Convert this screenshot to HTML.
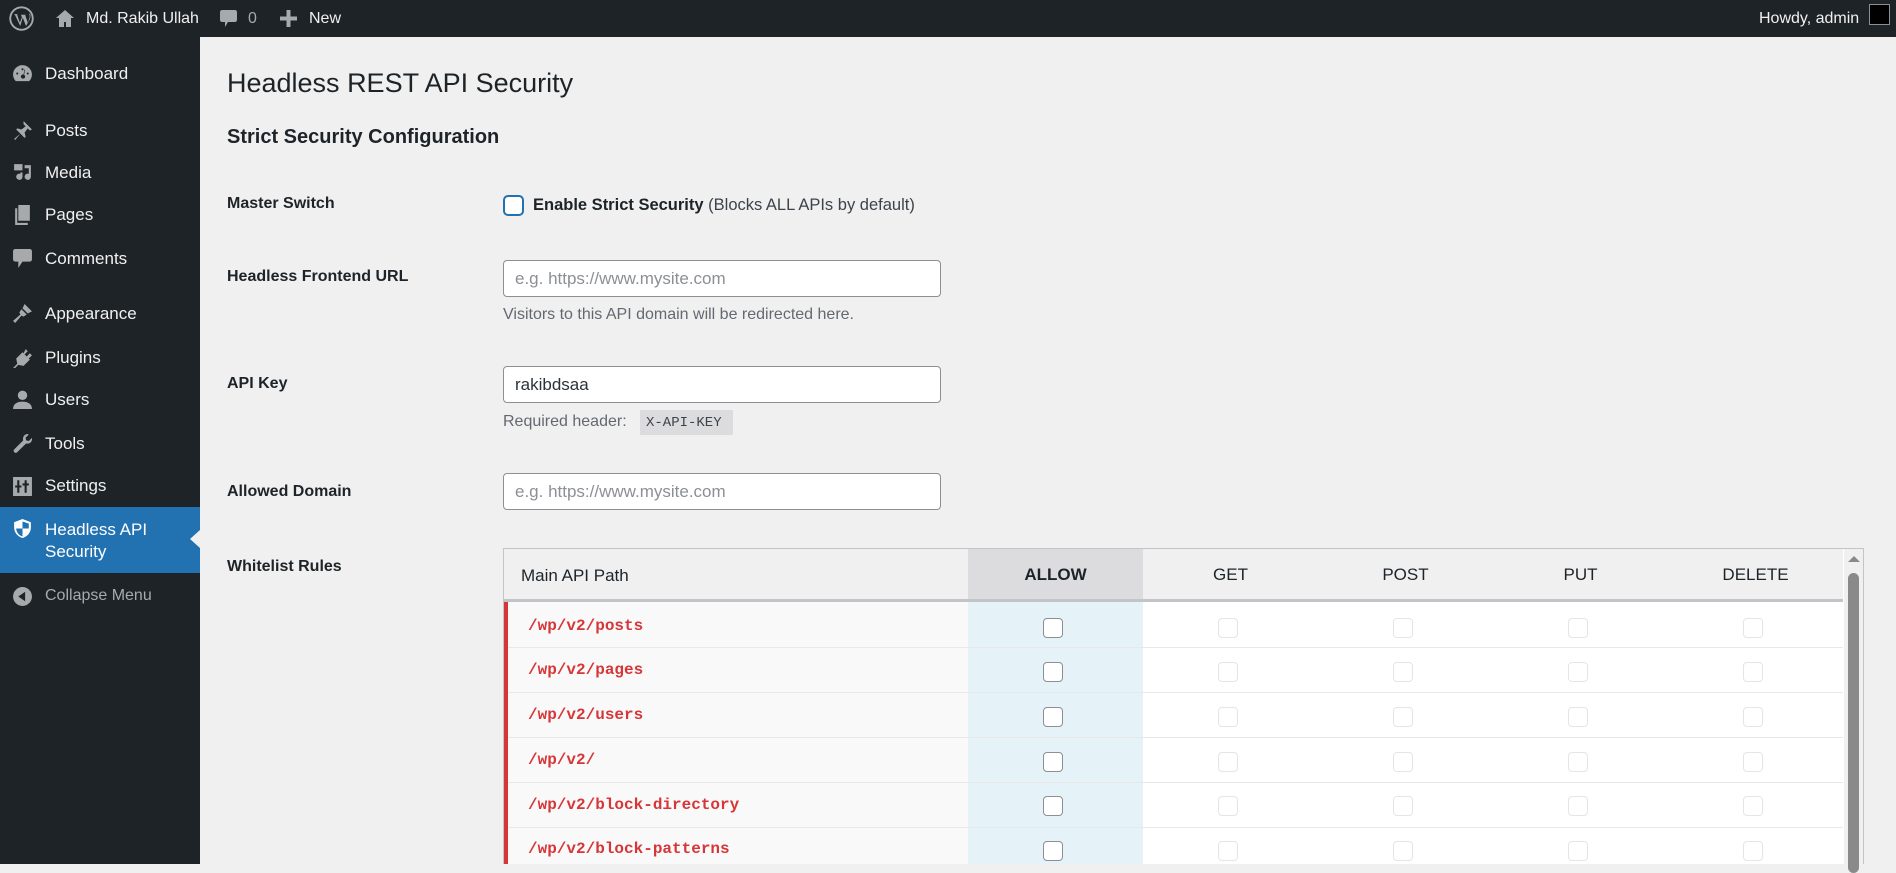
<!DOCTYPE html>
<html><head><meta charset="utf-8"><style>
*{box-sizing:border-box;margin:0;padding:0}
body{width:1896px;height:864px;overflow:hidden;background:#f0f0f1;font-family:"Liberation Sans",Arial,sans-serif;color:#1d2327;position:relative}
.abs{position:absolute}
#bar{left:0;top:0;width:1896px;height:37px;background:#1d2327;color:#f0f0f1;font-size:16px}
#side{left:0;top:37px;width:200px;height:827px;background:#1d2327}
.mi{position:absolute;left:45px;color:#f0f0f1;font-size:17px;line-height:20px}
.ic{position:absolute;left:12px;width:21px;height:21px;fill:#a7aaad}
.lbl{position:absolute;left:227px;font-size:16px;font-weight:bold;color:#1d2327}
.inp{position:absolute;left:503px;width:438px;height:37px;background:#fff;border:1px solid #8c8f94;border-radius:4px;font-size:17px;padding:8px 11px;color:#8c8f94}
.help{position:absolute;left:503px;font-size:16px;color:#646970}
.cb{position:absolute;width:20px;height:20px;border:1px solid #8c8f94;border-radius:4px;background:#fff}
.cbl{position:absolute;width:20px;height:20px;border:1px solid #e5e5e5;border-radius:4px;background:#fff}
.th{position:absolute;top:548px;height:54px;line-height:54px;font-size:17px;text-align:center;color:#1d2327}
.path{position:absolute;left:528px;font-family:"Liberation Mono",monospace;font-weight:bold;font-size:16px;color:#d63638}
</style></head><body>
<div id="bar" class="abs">
 <svg class="abs" style="left:9px;top:6px" width="25" height="25" viewBox="0 0 20 20"><circle cx="10" cy="10" r="9" fill="none" stroke="#a7aaad" stroke-width="1.5"/><path d="M4 6.5h3l-.5.5 2.2 6.3L10.3 9 9.6 7H11h2.5l-.5.5 2.1 6 1.4-4.5c.3-1-.2-2.3-.6-3l1 .5c.6 1.6 0 3.4-.3 4.3L13.6 16 11 9.3 9 16 4.9 7.4z" fill="#a7aaad"/></svg>
 <svg class="abs" style="left:55px;top:9px" width="20" height="19" viewBox="0 0 20 19"><path d="M10 1 1 9h3v9h5v-5h2v5h5V9h3z" fill="#a7aaad"/></svg>
 <span class="abs" style="left:86px;top:10px">Md. Rakib Ullah</span>
 <svg class="abs" style="left:219px;top:9px" width="19" height="20" viewBox="0 0 19 20"><path d="M3 1h13c1 0 2 1 2 2v8c0 1-1 2-2 2H9l-3 5v-5H3c-1 0-2-1-2-2V3c0-1 1-2 2-2z" fill="#a7aaad"/></svg>
 <span class="abs" style="left:248px;top:10px;color:#a7aaad">0</span>
 <svg class="abs" style="left:280px;top:10px" width="17" height="17" viewBox="0 0 17 17"><path d="M6.5 0h4v6.5H17v4h-6.5V17h-4v-6.5H0v-4h6.5z" fill="#a7aaad"/></svg>
 <span class="abs" style="left:309px;top:10px">New</span>
 <span class="abs" style="left:1759px;top:10px">Howdy, admin</span>
 <div class="abs" style="left:1869px;top:4px;width:21px;height:21px;border:1px solid #8c8f94;background:#000"></div>
</div>
<div id="side" class="abs"></div>
<div class="abs" style="left:0;top:507px;width:200px;height:66px;background:#2271b1"></div>
<div class="abs" style="left:190px;top:530px;width:0;height:0;border-top:9px solid transparent;border-bottom:9px solid transparent;border-right:10px solid #f0f0f1"></div>
<svg class="ic" style="top:63px" viewBox="0 0 20 20"><path d="M10 2a9 9 0 0 0-9 9c0 2.5 1 4.7 2.6 6.3h12.8A9 9 0 0 0 10 2zm0 3a1 1 0 1 1 0 2 1 1 0 0 1 0-2zM5 9a1 1 0 1 1 0 2 1 1 0 0 1 0-2zm10 0a1 1 0 1 1 0 2 1 1 0 0 1 0-2zm-4 2 1-5 .5.2-1 5A2 2 0 1 1 11 11z"/></svg>
<div class="mi" style="top:64px">Dashboard</div>
<svg class="ic" style="top:120px" viewBox="0 0 20 20"><path d="M11 1l8 8-2 1-2-2-3 4 1 4-1 1-4-4-5 6-1-1 6-5-4-4 1-1 4 1 4-3-2-2z"/></svg>
<div class="mi" style="top:121px">Posts</div>
<svg class="ic" style="top:162px" viewBox="0 0 20 20"><path d="M2 2h8v6H2zM12 3h6v11a3 3 0 1 1-2-2.8V6h-4zM3 10h7v4a3 3 0 1 1-2-2.8V10z"/></svg>
<div class="mi" style="top:163px">Media</div>
<svg class="ic" style="top:204px" viewBox="0 0 20 20"><path d="M6 1h11v15H6zM3 4h2v14h10v2H3z"/></svg>
<div class="mi" style="top:205px">Pages</div>
<svg class="ic" style="top:248px" viewBox="0 0 20 20"><path d="M3 1h14c1 0 2 1 2 2v8c0 1-1 2-2 2h-7l-4 6v-6H3c-1 0-2-1-2-2V3c0-1 1-2 2-2z"/></svg>
<div class="mi" style="top:249px">Comments</div>
<svg class="ic" style="top:303px" viewBox="0 0 20 20"><path d="M12 1l7 7-4 2-5-5zM9 6l5 5-3 2-2-1-6 7-2-2 7-6-1-2z"/></svg>
<div class="mi" style="top:304px">Appearance</div>
<svg class="ic" style="top:347px" viewBox="0 0 20 20"><path d="M13 2l2 2-3 3 2 2 3-3 2 2-3 3 1 1-6 6-5-1-4 4-1-1 4-4-1-5 6-6 1 1z"/></svg>
<div class="mi" style="top:348px">Plugins</div>
<svg class="ic" style="top:389px" viewBox="0 0 20 20"><circle cx="10" cy="6" r="4.5"/><path d="M1 19c0-5 4-7 9-7s9 2 9 7z"/></svg>
<div class="mi" style="top:390px">Users</div>
<svg class="ic" style="top:433px" viewBox="0 0 20 20"><path d="M15 1a4.5 4.5 0 0 0-4.3 6L2 15.7a2 2 0 0 0 2.8 2.8L13.4 10a4.5 4.5 0 0 0 5.6-5.4l-3 3-2.5-.6-.6-2.5 3-3A4.5 4.5 0 0 0 15 1z"/></svg>
<div class="mi" style="top:434px">Tools</div>
<svg class="ic" style="top:476px" viewBox="0 0 20 20"><path d="M1 1h18v18H1zm4 3v5H3v2h2v5h2v-5h2V9H7V4zm7 0v3h-2v2h2v7h2V9h2V7h-2V4z"/></svg>
<div class="mi" style="top:476px">Settings</div>
<svg class="ic" style="top:518px;fill:#fff" viewBox="0 0 20 20"><path d="M10 1l8 3v5c0 5-4 9-8 10-4-1-8-5-8-10V4z"/><path d="M10 3.3v6.7H4c0 3.8 3 6.7 6 7.6V10h6V5.4z" fill="#2271b1"/></svg>
<div class="mi" style="top:519px;color:#fff;line-height:22px">Headless API<br>Security</div>
<svg class="ic" style="top:586px" viewBox="0 0 20 20"><circle cx="10" cy="10" r="9"/><path d="M12.5 5.5v9L6 10z" fill="#1d2327"/></svg>
<div class="mi" style="top:586px;color:#a7aaad;font-size:16px">Collapse Menu</div>

<div class="abs" style="left:227px;top:68px;font-size:27px;color:#1d2327">Headless REST API Security</div>
<div class="abs" style="left:227px;top:126px;font-size:20px;font-weight:bold">Strict Security Configuration</div>

<div class="lbl" style="top:195px">Master Switch</div>
<div class="abs" style="left:503px;top:195px;width:21px;height:21px;border:2px solid #2271b1;border-radius:5px;background:#fff"></div>
<div class="abs" style="left:533px;top:196px;font-size:16.5px;color:#3c434a"><b style="color:#1d2327">Enable Strict Security</b> (Blocks ALL APIs by default)</div>

<div class="lbl" style="top:268px">Headless Frontend URL</div>
<div class="inp" style="top:260px">e.g. https://www.mysite.com</div>
<div class="help" style="top:306px">Visitors to this API domain will be redirected here.</div>

<div class="lbl" style="top:375px">API Key</div>
<div class="inp" style="top:366px;color:#2c3338">rakibdsaa</div>
<div class="help" style="top:413px">Required header:</div>
<div class="abs" style="left:640px;top:410px;width:93px;height:25px;background:#dcdcde;font-family:'Liberation Mono',monospace;font-size:14px;color:#3c434a;padding:5px 6px">X-API-KEY</div>

<div class="lbl" style="top:483px">Allowed Domain</div>
<div class="inp" style="top:473px">e.g. https://www.mysite.com</div>

<div class="lbl" style="top:558px">Whitelist Rules</div>

<div class="abs" style="left:503px;top:548px;width:1361px;height:316px;border:1px solid #c3c4c7;border-bottom:none;background:#fff;overflow:hidden">
</div>
<div class="abs" style="left:504px;top:549px;width:1339px;height:53px;background:#f0f0f1;border-bottom:3px solid #c3c4c7"></div>
<div class="abs" style="left:968px;top:549px;width:175px;height:50px;background:#dcdcde"></div>
<div class="abs" style="left:521px;top:566px;font-size:17px;color:#1d2327">Main API Path</div>
<div class="th" style="left:968px;width:175px;font-weight:bold">ALLOW</div>
<div class="th" style="left:1143px;width:175px">GET</div>
<div class="th" style="left:1318px;width:175px">POST</div>
<div class="th" style="left:1493px;width:175px">PUT</div>
<div class="th" style="left:1668px;width:175px">DELETE</div>
<div class="abs" style="left:504px;top:602px;width:464px;height:262px;background:#f9f9f9"></div>
<div class="abs" style="left:968px;top:602px;width:175px;height:262px;background:#e5f3f9"></div>
<div class="abs" style="left:504px;top:602px;width:4px;height:262px;background:#d63638"></div>
<div class="abs" style="left:508px;top:647px;width:1335px;height:1px;background:#e8e8e8"></div>
<div class="abs" style="left:508px;top:692px;width:1335px;height:1px;background:#e8e8e8"></div>
<div class="abs" style="left:508px;top:737px;width:1335px;height:1px;background:#e8e8e8"></div>
<div class="abs" style="left:508px;top:782px;width:1335px;height:1px;background:#e8e8e8"></div>
<div class="abs" style="left:508px;top:827px;width:1335px;height:1px;background:#e8e8e8"></div>
<div class="path" style="top:617px">/wp/v2/posts</div>
<div class="path" style="top:661px">/wp/v2/pages</div>
<div class="path" style="top:706px">/wp/v2/users</div>
<div class="path" style="top:751px">/wp/v2/</div>
<div class="path" style="top:796px">/wp/v2/block-directory</div>
<div class="path" style="top:840px">/wp/v2/block-patterns</div>
<div class="cb" style="left:1043px;top:618px"></div><div class="cbl" style="left:1218px;top:618px"></div><div class="cbl" style="left:1393px;top:618px"></div><div class="cbl" style="left:1568px;top:618px"></div><div class="cbl" style="left:1743px;top:618px"></div>
<div class="cb" style="left:1043px;top:662px"></div><div class="cbl" style="left:1218px;top:662px"></div><div class="cbl" style="left:1393px;top:662px"></div><div class="cbl" style="left:1568px;top:662px"></div><div class="cbl" style="left:1743px;top:662px"></div>
<div class="cb" style="left:1043px;top:707px"></div><div class="cbl" style="left:1218px;top:707px"></div><div class="cbl" style="left:1393px;top:707px"></div><div class="cbl" style="left:1568px;top:707px"></div><div class="cbl" style="left:1743px;top:707px"></div>
<div class="cb" style="left:1043px;top:752px"></div><div class="cbl" style="left:1218px;top:752px"></div><div class="cbl" style="left:1393px;top:752px"></div><div class="cbl" style="left:1568px;top:752px"></div><div class="cbl" style="left:1743px;top:752px"></div>
<div class="cb" style="left:1043px;top:796px"></div><div class="cbl" style="left:1218px;top:796px"></div><div class="cbl" style="left:1393px;top:796px"></div><div class="cbl" style="left:1568px;top:796px"></div><div class="cbl" style="left:1743px;top:796px"></div>
<div class="cb" style="left:1043px;top:841px"></div><div class="cbl" style="left:1218px;top:841px"></div><div class="cbl" style="left:1393px;top:841px"></div><div class="cbl" style="left:1568px;top:841px"></div><div class="cbl" style="left:1743px;top:841px"></div>
<div class="abs" style="left:1844px;top:549px;width:19px;height:315px;background:#f0f0f1"></div>
<div class="abs" style="left:1848px;top:556px;width:0;height:0;border-left:6px solid transparent;border-right:6px solid transparent;border-bottom:6px solid #8a8a8a"></div>
<div class="abs" style="left:1848px;top:573px;width:11px;height:300px;background:#8a8a8a;border-radius:6px"></div>
</body></html>
